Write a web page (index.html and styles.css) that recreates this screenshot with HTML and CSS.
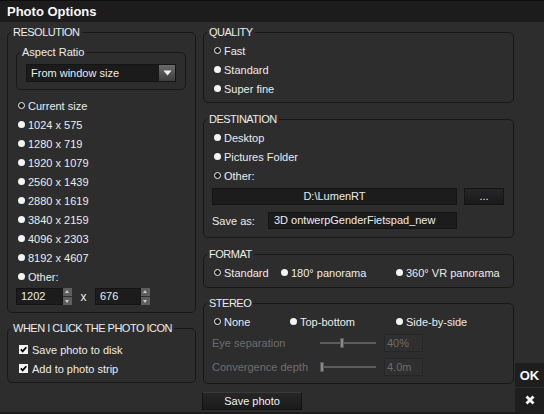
FILE: index.html
```html
<!DOCTYPE html>
<html>
<head>
<meta charset="utf-8">
<link rel="stylesheet" href="styles.css">
</head>
<body>
<div class="window">
  <div class="titlebar">Photo Options</div>
  <div class="main">
    <div class="left">
      <fieldset class="group res">
        <legend class="caps">RESOLUTION</legend>
        <fieldset class="group aspect">
          <legend>Aspect Ratio</legend>
          <div class="select">
            <span class="select-text">From window size</span>
            <span class="select-btn"><svg width="9" height="6" viewBox="0 0 9 6"><path d="M0.5 0.5 H8.5 L4.5 5.5 Z" fill="#f2f2f2"/></svg></span>
          </div>
        </fieldset>
        <div class="list res-list">
          <div class="opt"><span class="radio on"></span>Current size</div>
          <div class="opt"><span class="radio"></span>1024 x 575</div>
          <div class="opt"><span class="radio"></span>1280 x 719</div>
          <div class="opt"><span class="radio"></span>1920 x 1079</div>
          <div class="opt"><span class="radio"></span>2560 x 1439</div>
          <div class="opt"><span class="radio"></span>2880 x 1619</div>
          <div class="opt"><span class="radio"></span>3840 x 2159</div>
          <div class="opt"><span class="radio"></span>4096 x 2303</div>
          <div class="opt"><span class="radio"></span>8192 x 4607</div>
          <div class="opt"><span class="radio"></span>Other:</div>
        </div>
        <div class="custom">
          <div class="spin w47"><span class="spin-val">1202</span></div>
          <div class="spin-btns"><span class="sb up"></span><span class="sb down"></span></div>
          <span class="times">x</span>
          <div class="spin w46"><span class="spin-val">676</span></div>
          <div class="spin-btns"><span class="sb up"></span><span class="sb down"></span></div>
        </div>
      </fieldset>
      <fieldset class="group click">
        <legend class="caps">WHEN I CLICK THE PHOTO ICON</legend>
        <div class="list chk-list">
          <div class="opt"><span class="check"><svg width="9" height="9" viewBox="0 0 9 9"><rect width="9" height="9" fill="#f4f4f4"/><path d="M1.8 4.4 L3.7 6.4 L7.3 2.2" fill="none" stroke="#000" stroke-width="1.7"/></svg></span>Save photo to disk</div>
          <div class="opt"><span class="check"><svg width="9" height="9" viewBox="0 0 9 9"><rect width="9" height="9" fill="#f4f4f4"/><path d="M1.8 4.4 L3.7 6.4 L7.3 2.2" fill="none" stroke="#000" stroke-width="1.7"/></svg></span>Add to photo strip</div>
        </div>
      </fieldset>
    </div>

    <div class="right">
      <fieldset class="group quality">
        <legend class="caps">QUALITY</legend>
        <div class="list rlist">
          <div class="opt"><span class="radio on"></span>Fast</div>
          <div class="opt"><span class="radio"></span>Standard</div>
          <div class="opt"><span class="radio"></span>Super fine</div>
        </div>
      </fieldset>
      <fieldset class="group dest">
        <legend class="caps">DESTINATION</legend>
        <div class="list rlist">
          <div class="opt"><span class="radio"></span>Desktop</div>
          <div class="opt"><span class="radio"></span>Pictures Folder</div>
          <div class="opt"><span class="radio on"></span>Other:</div>
        </div>
        <div class="path-row">
          <div class="path">D:\LumenRT</div>
          <div class="dots">...</div>
        </div>
        <div class="save-row">
          <span class="save-label">Save as:</span>
          <div class="save-input">3D ontwerpGenderFietspad_new</div>
        </div>
      </fieldset>
      <fieldset class="group format">
        <legend class="caps">FORMAT</legend>
        <div class="hrow">
          <div class="opt c67"><span class="radio on"></span>Standard</div>
          <div class="opt c115"><span class="radio"></span>180° panorama</div>
          <div class="opt"><span class="radio"></span>360° VR panorama</div>
        </div>
      </fieldset>
      <fieldset class="group stereo">
        <legend class="caps">STEREO</legend>
        <div class="hrow">
          <div class="opt c76"><span class="radio on"></span>None</div>
          <div class="opt c106"><span class="radio"></span>Top-bottom</div>
          <div class="opt"><span class="radio"></span>Side-by-side</div>
        </div>
        <div class="slider-row first">
          <span class="slabel">Eye separation</span>
          <div class="track"><span class="thumb" style="left: 20px"></span></div>
          <div class="sval">40%</div>
        </div>
        <div class="slider-row second">
          <span class="slabel">Convergence depth</span>
          <div class="track"><span class="thumb" style="left: 0px"></span></div>
          <div class="sval">4.0m</div>
        </div>
      </fieldset>
      <div class="btn save">Save photo</div>
    </div>

    <div class="strip">
      <div class="sbtn ok">OK</div>
      <div class="sbtn close"><svg width="10" height="10" viewBox="0 0 10 10"><path d="M1.5 1.5 L8.5 8.5 M8.5 1.5 L1.5 8.5" stroke="#f4f4f4" stroke-width="2.8"/></svg></div>
    </div>
  </div>
</div>
</body>
</html>
```

FILE: styles.css
```css
* { box-sizing: border-box; }
html, body { margin: 0; padding: 0; }
body {
  width: 544px;
  height: 414px;
  background: #2d2d2d;
  font-family: "Liberation Sans", Arial, sans-serif;
  font-size: 11px;
  color: #ececec;
  overflow: hidden;
}
.window {
  width: 544px;
  height: 414px;
  display: flex;
  flex-direction: column;
  border-bottom: 2px solid #1c1c1c;
}
.titlebar {
  height: 22px;
  line-height: 21px;
  padding-left: 7px;
  background: #1c1c1c;
  border-top: 1px solid #0e0e0e;
  font-weight: bold;
  font-size: 13px;
  color: #fafafa;
}
.main { flex: 1; display: flex; }
.left {
  width: 189px;
  margin-left: 7px;
  padding-top: 4px;
  display: flex;
  flex-direction: column;
}
.right {
  width: 311px;
  margin-left: 7px;
  padding-top: 4px;
  display: flex;
  flex-direction: column;
}
.strip {
  width: 29px;
  margin-left: 1px;
  display: flex;
  flex-direction: column;
  justify-content: flex-end;
  gap: 1px;
}

/* group boxes */
.group {
  margin: 0;
  border: 1px solid #181818;
  border-radius: 5px;
  padding: 0 3px;
  min-width: 0;
}
.group > legend {
  padding: 0 2px;
  font-size: 11px;
  line-height: 12px;
  color: #ececec;
}
.group > legend.caps { letter-spacing: -0.5px; }

.res { padding-top: 8px; padding-bottom: 7px; }
.aspect {
  width: 170px;
  margin-left: 5px;
  padding-top: 6px;
  padding-bottom: 7px;
}
.click { margin-top: 9px; padding-top: 6px; padding-bottom: 4px; }
.quality { padding-top: 3px; padding-bottom: 4px; }
.dest { margin-top: 10px; padding-top: 3px; padding-bottom: 8px; }
.format { margin-top: 10px; padding-top: 3px; padding-bottom: 5px; }
.stereo { margin-top: 9px; padding-top: 3px; padding-bottom: 7px; }

/* select */
.select {
  margin-left: 6px;
  width: 150px;
  height: 18px;
  background: #1b1b1b;
  border: 1px solid #141414;
  display: flex;
  align-items: center;
  justify-content: space-between;
}
.select-text { padding-left: 4px; }
.select-btn {
  width: 16px;
  height: 16px;
  background: linear-gradient(#6a6a6a, #3e3e3e);
  display: flex;
  align-items: center;
  justify-content: center;
}

/* options */
.opt {
  height: 19px;
  display: flex;
  align-items: center;
  white-space: nowrap;
}
.radio {
  width: 7px;
  height: 7px;
  border-radius: 50%;
  background: #f4f4f4;
  margin-right: 3px;
  flex: none;
}
.radio.on {
  background: #1a1a1a;
  border: 1.5px solid #f4f4f4;
}
.res-list { margin-top: 6px; padding-left: 7px; }
.rlist { padding-left: 7px; }
.chk-list { padding-left: 8px; }
.check { width: 9px; height: 9px; margin-right: 4px; display: flex; }

/* spinners */
.custom {
  margin-top: 2px;
  margin-left: 5px;
  display: flex;
  align-items: center;
  height: 17px;
}
.spin {
  height: 17px;
  background: #1c1c1c;
  border: 1px solid #141414;
  padding-left: 4px;
  line-height: 15px;
}
.w47 { width: 47px; }
.w46 { width: 46px; }
.spin-btns {
  width: 9px;
  height: 17px;
  display: flex;
  flex-direction: column;
  gap: 1px;
}
.sb {
  flex: 1;
  background: #5e5e5e;
  position: relative;
}
.sb::after {
  content: "";
  position: absolute;
  left: 2px;
  border-left: 2.5px solid transparent;
  border-right: 2.5px solid transparent;
}
.sb.up::after { top: 2px; border-bottom: 3px solid #c8c8c8; }
.sb.down::after { top: 3px; border-top: 3px solid #c8c8c8; }
.times { width: 23px; text-align: center; font-size: 12px; }

/* destination */
.path-row {
  margin-top: 3px;
  padding-left: 5px;
  display: flex;
  gap: 7px;
}
.path {
  width: 245px;
  height: 17px;
  background: #1c1c1c;
  border: 1px solid #141414;
  text-align: center;
  line-height: 15px;
}
.dots {
  width: 40px;
  height: 17px;
  background: linear-gradient(#262626, #1a1a1a);
  border: 1px solid #141414;
  text-align: center;
  line-height: 14px;
}
.save-row {
  margin-top: 7px;
  padding-left: 5px;
  display: flex;
  align-items: center;
}
.save-label { width: 56px; }
.save-input {
  width: 189px;
  height: 17px;
  background: #1c1c1c;
  border: 1px solid #141414;
  padding-left: 5px;
  line-height: 15px;
}

/* horizontal radio rows */
.hrow { display: flex; padding-left: 7px; }
.c67 { width: 67px; }
.c115 { width: 115px; }
.c76 { width: 76px; }
.c106 { width: 106px; }

/* sliders */
.slider-row {
  display: flex;
  align-items: center;
  height: 18px;
  padding-left: 5px;
  color: #6d6d6d;
}
.slider-row.first { margin-top: 3px; }
.slider-row.second { margin-top: 6px; }
.slabel { width: 108px; white-space: nowrap; }
.track {
  width: 56px;
  height: 2px;
  background: #5c5c5c;
  position: relative;
}
.thumb {
  position: absolute;
  top: -4px;
  width: 4px;
  height: 10px;
  background: #8a8a8a;
  border: 1px solid #555;
}
.sval {
  margin-left: 8px;
  width: 39px;
  height: 18px;
  background: #2f2f2f;
  border: 1px solid #262626;
  padding-left: 2px;
  line-height: 16px;
}

/* buttons */
.btn.save {
  margin-top: 8px;
  margin-left: -1px;
  width: 100px;
  height: 18px;
  background: linear-gradient(#262626, #1b1b1b);
  border: 1px solid #141414;
  border-top-color: #3a3a3a;
  text-align: center;
  line-height: 16px;
  color: #f2f2f2;
}
.sbtn {
  height: 24px;
  background: #1e1e1e;
  display: flex;
  align-items: center;
  justify-content: center;
  color: #fafafa;
  font-weight: bold;
  font-size: 13px;
}
```
